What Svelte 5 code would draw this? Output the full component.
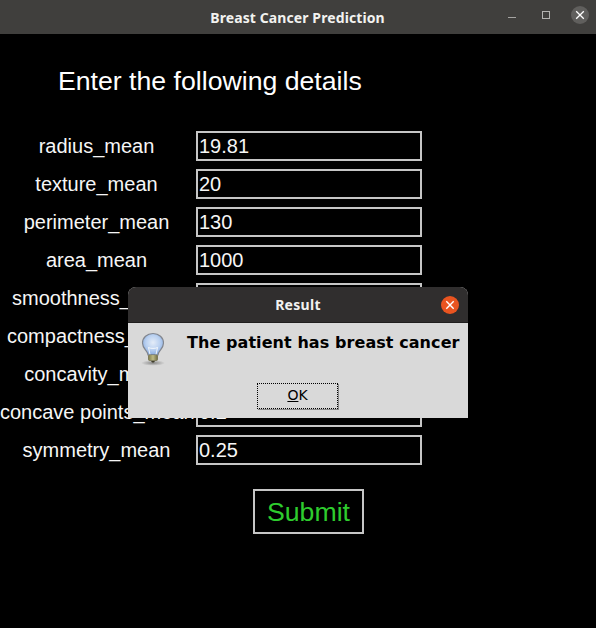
<script>
  const fields = [
    ['radius_mean', '19.81'],
    ['texture_mean', '20'],
    ['perimeter_mean', '130'],
    ['area_mean', '1000'],
    ['smoothness_mean', '0.1'],
    ['compactness_mean', '0.2'],
    ['concavity_mean', '0.3'],
    ['concave points_mean', '0.2'],
    ['symmetry_mean', '0.25']
  ];
</script>

<div class="window">
  <header class="titlebar">
    <span class="title">Breast Cancer Prediction</span>
    <div class="controls">
      <svg class="ctl" width="12" height="12" viewBox="0 0 12 12"><path d="M0 8.500h8" stroke="#a5a4a2" stroke-width="1"/></svg>
      <svg class="ctl" width="12" height="12" viewBox="0 0 12 12"><rect x="1.500" y="2.500" width="7" height="7" fill="none" stroke="#b4b3b1"/></svg>
      <span class="close">
        <svg width="18" height="18" viewBox="0 0 18 18"><path d="M5.200 5.200l7.600 7.600M12.800 5.200l-7.600 7.600" stroke="#fff" stroke-width="1.300"/></svg>
      </span>
    </div>
  </header>

  <main class="content">
    <h1>Enter the following details</h1>
    <form class="fields">
      {#each fields as [label, value]}
        <label class="row">
          <span class="name">{label}</span>
          <input class="entry" {value} readonly />
        </label>
      {/each}
    </form>
    <div class="submit-wrap"><button class="submit" type="button">Submit</button></div>
  </main>

  <div class="dialog">
    <div class="dialog-head">
      <span class="dialog-title">Result</span>
      <span class="dialog-close">
        <svg width="18" height="18" viewBox="0 0 18 18"><path d="M5.300 5.300l7.400 7.400M12.700 5.300l-7.400 7.400" stroke="#fff" stroke-width="1.400"/></svg>
      </span>
    </div>
    <div class="dialog-body">
      <svg class="bulb" width="26" height="34" viewBox="0 0 26 34">
        <defs>
          <radialGradient id="glass" cx="0.5" cy="0.42" r="0.62">
            <stop offset="0" stop-color="#e4ecf8"/>
            <stop offset="0.55" stop-color="#b9d0f0"/>
            <stop offset="1" stop-color="#7fa5de"/>
          </radialGradient>
          <linearGradient id="base" x1="0" x2="1" y1="0" y2="0">
            <stop offset="0" stop-color="#8d8a52"/>
            <stop offset="0.5" stop-color="#e6e3a8"/>
            <stop offset="1" stop-color="#77744a"/>
          </linearGradient>
          <radialGradient id="shade" cx="0.5" cy="0.5" r="0.5">
            <stop offset="0" stop-color="#666" stop-opacity="0.7"/>
            <stop offset="1" stop-color="#666" stop-opacity="0"/>
          </radialGradient>
        </defs>
        <ellipse cx="13" cy="31" rx="12" ry="2.800" fill="url(#shade)"/>
        <path d="M13 1.500C7 1.500 2.500 5.700 2.500 11c0 3.500 1.900 5.600 3.500 7.700 1.100 1.400 1.900 2.800 2 4.300h10c.1-1.500.9-2.900 2-4.300 1.600-2.100 3.500-4.200 3.500-7.700 0-5.300-4.500-9.500-10.500-9.500z" fill="url(#glass)" stroke="#82868e" stroke-width="1.200"/>
        <path d="M10 22.500l-1.500-7M16 22.500l1.500-7M8.500 15.500c1.500 1.200 7.500 1.200 9 0" fill="none" stroke="#fff" stroke-width="1" opacity="0.8"/>
        <rect x="8.500" y="23" width="9" height="5.500" rx="1" fill="url(#base)" stroke="#66633f" stroke-width="0.700"/>
        <path d="M9 25h8M9 27h8" stroke="#5e5c38" stroke-width="0.600"/>
        <path d="M11 29h4l-1 1.500h-2z" fill="#3f3d2b"/>
      </svg>
      <p class="message">The patient has breast cancer</p>
    </div>
    <div class="dialog-foot">
      <button class="ok" type="button"><span class="ok-in"><u>O</u>K</span></button>
    </div>
  </div>
</div>

<style>
  :global(body) {
    margin: 0;
    background: #000;
  }
  .window {
    position: relative;
    width: 596px;
    height: 628px;
    overflow: hidden;
    background: #000;
    font-family: "Liberation Sans", Arial, sans-serif;
  }
  .titlebar {
    position: relative;
    height: 34px;
    background: #403f3d;
    display: flex;
    align-items: center;
    justify-content: center;
  }
  .title {
    font-family: "Noto Sans", sans-serif;
    font-weight: 700;
    font-size: 14px;
    letter-spacing: 0.1px;
    color: #f2f2f0;
    margin-left: -1px;
  }
  .controls {
    position: absolute;
    right: 7px;
    top: 6px;
    display: flex;
    align-items: center;
  }
  .ctl {
    margin-right: 18px;
  }
  .controls .ctl:first-child {
    margin-right: 21px;
  }
  .close {
    width: 18px;
    height: 18px;
    border-radius: 50%;
    background: #605f5d;
    display: flex;
  }
  .content {
    display: flex;
    flex-direction: column;
    align-items: flex-start;
  }
  h1 {
    margin: 31px 0 0 58px;
    font-size: 26.67px;
    line-height: 32px;
    font-weight: 400;
    color: #fff;
  }
  .fields {
    margin-top: 34px;
    display: flex;
    flex-direction: column;
    gap: 8px;
  }
  .row {
    display: flex;
    align-items: center;
  }
  .name {
    width: 193px;
    text-align: center;
    font-size: 20px;
    color: #f6f6f6;
    white-space: nowrap;
  }
  .entry {
    margin: 0 0 0 3px;
    box-sizing: border-box;
    width: 226px;
    height: 30px;
    padding: 0 1px;
    border: 2px solid #c6c6c6;
    border-radius: 0;
    outline: none;
    background: #000;
    color: #f6f6f6;
    font: 20px "Liberation Sans", Arial, sans-serif;
  }
  .submit-wrap {
    margin: 24px 0 0 253px;
  }
  .submit {
    box-sizing: border-box;
    width: 111px;
    height: 45px;
    padding: 2px 0 0;
    border: 2px solid #c6c6c6;
    background: #000;
    color: #2ecc2e;
    font: 26.67px "Liberation Sans", Arial, sans-serif;
  }
  .dialog {
    position: absolute;
    left: 128px;
    top: 287px;
    width: 340px;
    height: 131px;
    background: #d9d9d9;
    border-radius: 8px 8px 0 0;
    overflow: hidden;
    display: flex;
    flex-direction: column;
  }
  .dialog-head {
    position: relative;
    height: 36px;
    background: #302e2e;
    border-bottom: 1px solid #1f1e1e;
    box-sizing: border-box;
    display: flex;
    align-items: center;
    justify-content: center;
  }
  .dialog-title {
    font-family: "Noto Sans", sans-serif;
    font-weight: 700;
    font-size: 14px;
    letter-spacing: 0.3px;
    color: #f2f2f0;
  }
  .dialog-close {
    position: absolute;
    right: 9px;
    top: 9px;
    width: 18px;
    height: 18px;
    border-radius: 50%;
    background: #e95420;
    display: flex;
  }
  .dialog-body {
    display: flex;
    align-items: flex-start;
    height: 60px;
  }
  .bulb {
    margin: 9px 0 0 12px;
    flex: none;
  }
  .message {
    margin: 10px 0 0 21px;
    font-family: "DejaVu Sans", sans-serif;
    font-weight: 700;
    font-size: 16px;
    letter-spacing: 0.07px;
    line-height: 20px;
    color: #000;
    white-space: nowrap;
  }
  .dialog-foot {
    display: flex;
    justify-content: center;
    padding-right: 0;
  }
  .ok {
    box-sizing: border-box;
    width: 81px;
    height: 26px;
    margin-right: 1px;
    padding: 0;
    background: #d9d9d9;
    border: 0;
    box-shadow: 1px 1px 0 #8a8a8a;
  }
  .ok-in {
    box-sizing: border-box;
    display: block;
    height: 100%;
    border: 1px dotted #000;
    font: 14px/22px "DejaVu Sans", sans-serif;
    color: #000;
    text-align: center;
  }
</style>
